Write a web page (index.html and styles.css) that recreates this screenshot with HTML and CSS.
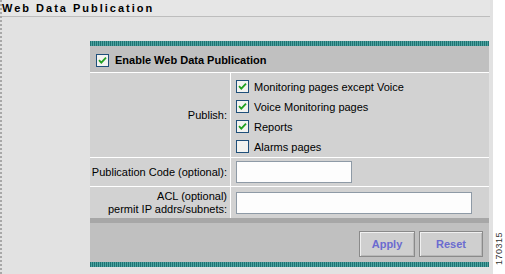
FILE: index.html
```html
<!DOCTYPE html>
<html>
<head>
<meta charset="utf-8">
<link rel="stylesheet" href="styles.css">
</head>
<body>
<div class="page">
  <div class="title">Web Data Publication</div>
  <div class="panel">
    <div class="stripe"></div>
    <div class="head">
      <svg class="cb" viewBox="0 0 13 13"><rect x="0.5" y="0.5" width="12" height="12" fill="#f3f3f0" stroke="#1e4f7a"/><path d="M3 6.2 L5.3 8.6 L10 3.6" fill="none" stroke="#21a121" stroke-width="1.8"/></svg>
      <span>Enable Web Data Publication</span>
    </div>
    <div class="row publish">
      <div class="label">Publish:</div>
      <div class="field list">
        <div class="opt"><svg class="cb" viewBox="0 0 13 13"><rect x="0.5" y="0.5" width="12" height="12" fill="#f3f3f0" stroke="#1e4f7a"/><path d="M3 6.2 L5.3 8.6 L10 3.6" fill="none" stroke="#21a121" stroke-width="1.8"/></svg><span>Monitoring pages except Voice</span></div>
        <div class="opt"><svg class="cb" viewBox="0 0 13 13"><rect x="0.5" y="0.5" width="12" height="12" fill="#f3f3f0" stroke="#1e4f7a"/><path d="M3 6.2 L5.3 8.6 L10 3.6" fill="none" stroke="#21a121" stroke-width="1.8"/></svg><span>Voice Monitoring pages</span></div>
        <div class="opt"><svg class="cb" viewBox="0 0 13 13"><rect x="0.5" y="0.5" width="12" height="12" fill="#f3f3f0" stroke="#1e4f7a"/><path d="M3 6.2 L5.3 8.6 L10 3.6" fill="none" stroke="#21a121" stroke-width="1.8"/></svg><span>Reports</span></div>
        <div class="opt"><svg class="cb" viewBox="0 0 13 13"><rect x="0.5" y="0.5" width="12" height="12" fill="#f3f3f0" stroke="#1e4f7a"/></svg><span>Alarms pages</span></div>
      </div>
    </div>
    <div class="row code">
      <div class="label">Publication Code (optional):</div>
      <div class="field"><div class="input short"></div></div>
    </div>
    <div class="row acl">
      <div class="label">ACL (optional)<br>permit IP addrs/subnets:</div>
      <div class="field"><div class="input long"></div></div>
    </div>
    <div class="darkbar"></div>
    <div class="actions">
      <button class="btn apply">Apply</button>
      <button class="btn reset">Reset</button>
    </div>
    <div class="stripe"></div>
  </div>
  <div class="fignum">170315</div>
</div>
</body>
</html>
```
FILE: styles.css
```css
html, body {
  margin: 0;
  padding: 0;
  background: #ffffff;
}
body {
  font-family: "Liberation Sans", Arial, sans-serif;
  font-size: 11px;
  color: #000;
}
.page {
  position: relative;
  width: 493px;
  height: 274px;
  background: #e2e2e2;
  border-left: 2px dotted #a8a8a8;
  box-sizing: border-box;
}
.title {
  height: 17px;
  box-sizing: border-box;
  border-bottom: 1px solid #bdbdbd;
  background: #e6e6e6;
  font-weight: bold;
  font-size: 11px;
  letter-spacing: 2px;
  line-height: 17px;
  margin-right: 3px;
}
.panel {
  margin-top: 24px;
  margin-left: 88px;
  width: 399px;
  display: flex;
  flex-direction: column;
}
.stripe {
  height: 5px;
  background: repeating-linear-gradient(90deg, #1f7373 0 1px, #4ea3a0 1px 2px);
}
.head {
  height: 27px;
  box-sizing: border-box;
  background: #c0c0c0;
  display: flex;
  align-items: center;
  gap: 6px;
  padding-left: 6px;
  padding-top: 2px;
  font-weight: bold;
  border-bottom: 1px solid #ffffff;
}
.cb {
  width: 13px;
  height: 13px;
  flex: none;
  display: block;
}
.row {
  display: flex;
  background: #d2d2d2;
  border-bottom: 1px solid #ffffff;
}
.row.publish { height: 84px; }
.row.code { height: 28px; }
.row.acl { height: 31px; border-bottom: none; }
.label {
  width: 141px;
  flex: none;
  border-right: 1px solid #ffffff;
  box-sizing: border-box;
  display: flex;
  align-items: center;
  justify-content: flex-end;
  text-align: right;
  padding-right: 3px;
  line-height: 13px;
}
.field {
  flex: 1;
  display: flex;
  align-items: center;
  padding-left: 5px;
}
.field.list {
  flex-direction: column;
  align-items: flex-start;
  justify-content: flex-start;
  padding-top: 7px;
  gap: 7px;
}
.opt {
  display: flex;
  align-items: center;
  gap: 5px;
  height: 13px;
}
.input {
  background: #fdfdfd;
  border: 1px solid #8e9aa6;
  box-sizing: border-box;
}
.input.short { width: 116px; height: 22px; }
.input.long { width: 236px; height: 22px; }
.darkbar {
  height: 5px;
  background: #a7a7a7;
}
.actions {
  height: 39px;
  background: #c0c0c0;
  display: flex;
  justify-content: flex-end;
  align-items: center;
  gap: 4px;
  padding-right: 6px;
  box-sizing: border-box;
}
.btn {
  height: 26px;
  background: #cfcfcf;
  border: 1px solid #8a8a8a;
  box-shadow: inset 1px 1px 0 #f0f0f0, inset -1px -1px 0 #b8b8b8;
  font-family: "Liberation Sans", Arial, sans-serif;
  font-size: 11px;
  font-weight: bold;
  color: #6b6bd0;
  padding: 0;
  margin-top: 2px;
}
.btn.apply { width: 56px; }
.btn.reset { width: 64px; }
.fignum {
  position: absolute;
  left: 492px;
  top: 265px;
  transform: rotate(-90deg);
  transform-origin: left top;
  font-size: 9px;
  color: #333;
  letter-spacing: 0.5px;
  line-height: 11px;
  background: #fff;
}
```
